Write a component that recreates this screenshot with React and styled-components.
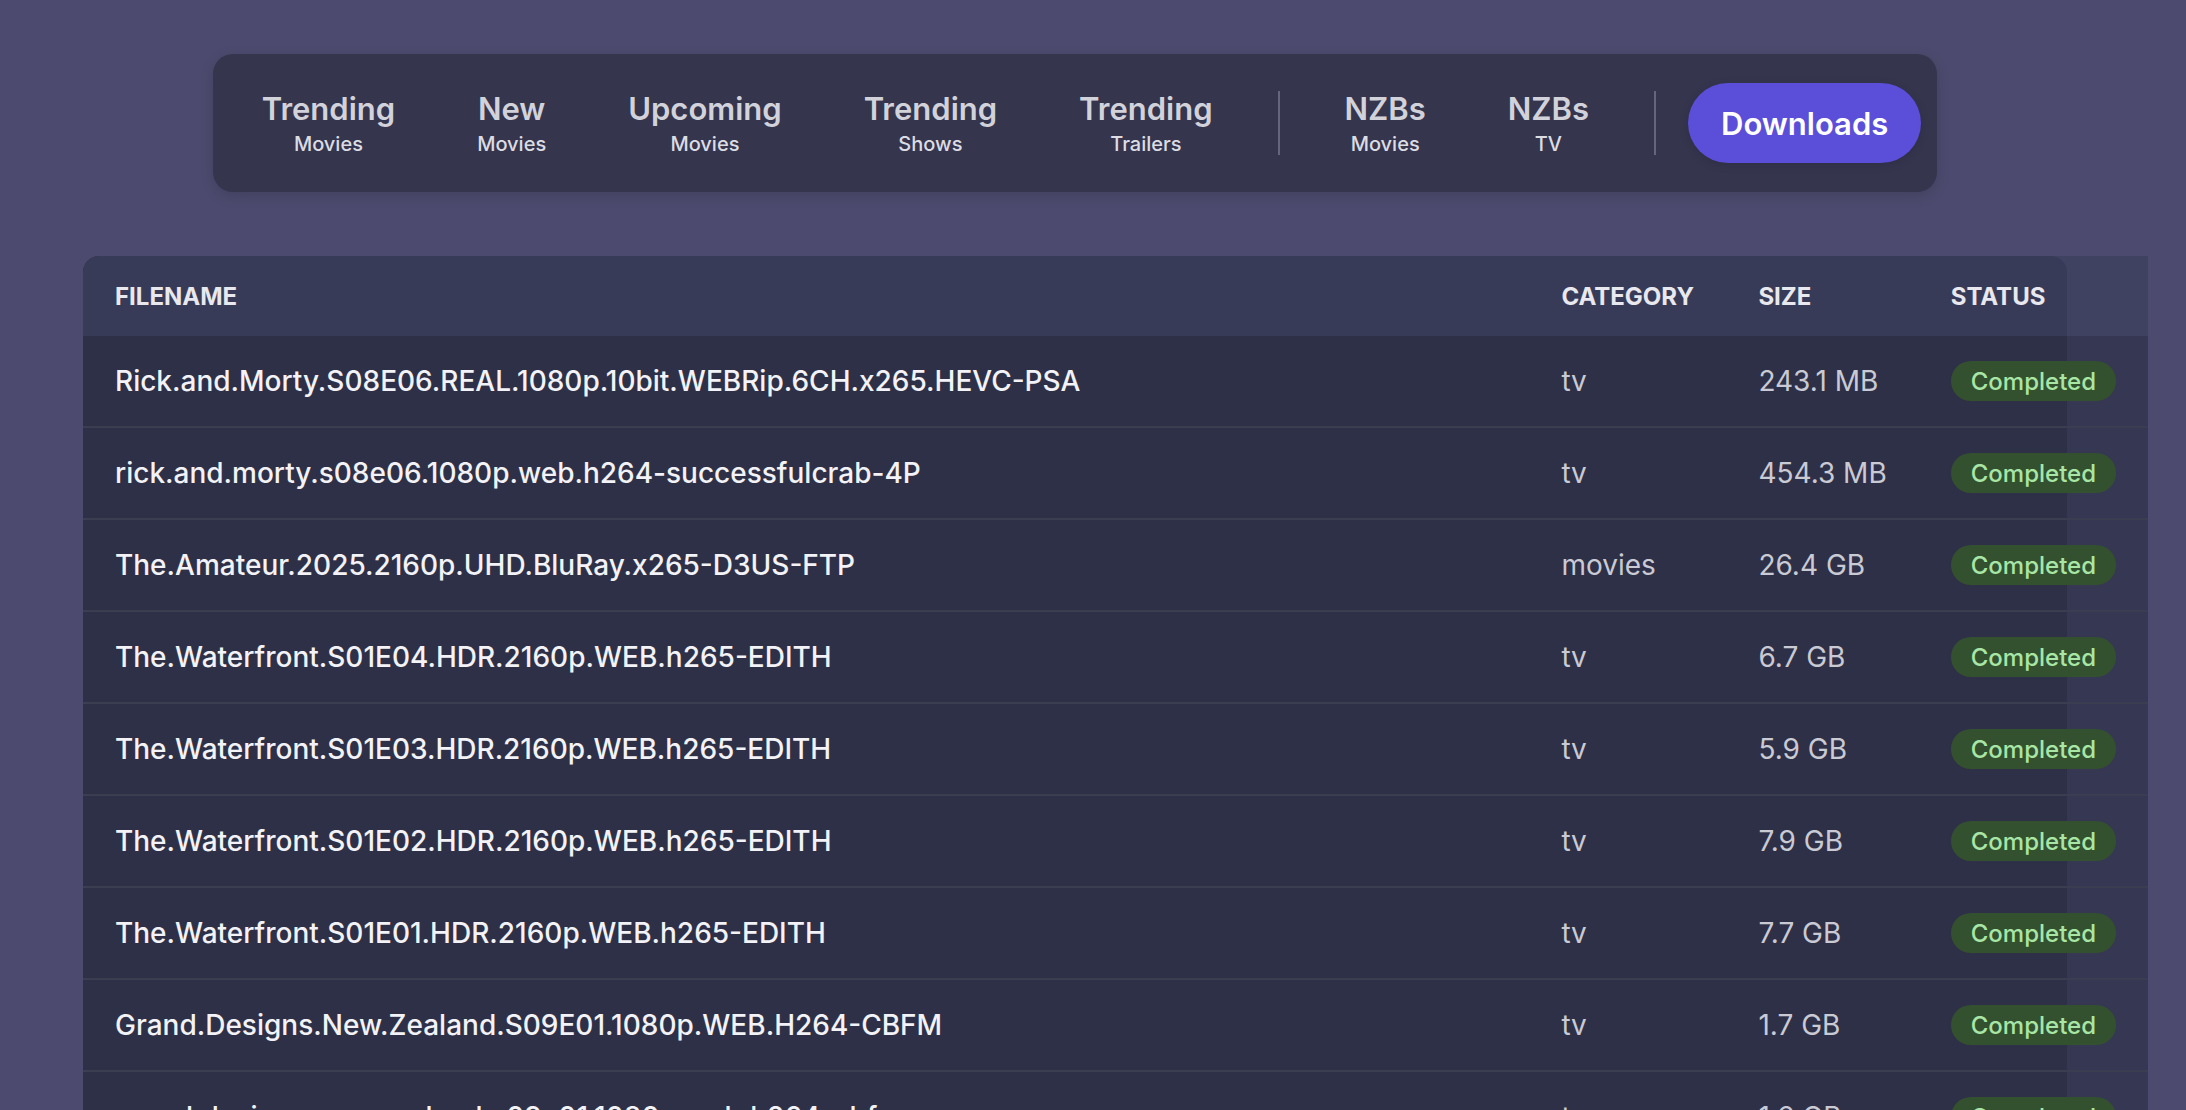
import React from "react";
import styled, { createGlobalStyle } from "styled-components";

const Global = createGlobalStyle`
  html, body { margin: 0; padding: 0; background: #4c4b6f; }
  body { font-family: Inter, "Noto Sans", "Liberation Sans", sans-serif; }
  * { box-sizing: border-box; }
`;

const Page = styled.div`
  width: 2150px;
  padding-top: 54px;
  padding-bottom: 64px;
`;

const Nav = styled.nav`
  width: fit-content;
  margin: 0 auto;
  display: flex;
  align-items: center;
  gap: 16px;
  padding: 29px 16px;
  background: #35354e;
  border-radius: 20px;
  box-shadow: 0 4px 14px rgba(0, 0, 0, 0.14);
`;

const NavItem = styled.button`
  display: flex;
  flex-direction: column;
  align-items: center;
  padding: 0 33px;
  border: 0;
  background: transparent;
  font-family: inherit;
  cursor: pointer;
`;

const NavTitle = styled.span`
  font-size: 31px;
  line-height: 40px;
  font-weight: 600;
  color: #d2d2da;
  white-space: nowrap;
`;

const NavSub = styled.span`
  margin-top: 1px;
  font-size: 20px;
  line-height: 28px;
  font-weight: 500;
  color: #dcdce3;
  white-space: nowrap;
`;

const Divider = styled.div`
  width: 2px;
  height: 64px;
  margin: 0 16px;
  background: #65657c;
`;

const PrimaryButton = styled.button`
  height: 80px;
  padding: 0 33px;
  border: 0;
  border-radius: 40px;
  background: #5b4ed9;
  color: #ffffff;
  font-family: inherit;
  font-size: 31px;
  font-weight: 600;
  white-space: nowrap;
  box-shadow: 0 2px 10px rgba(0, 0, 0, 0.14);
  cursor: pointer;
`;

const Card = styled.section`
  max-width: 1984px;
  margin: 64px auto 0;
  background: #24283a;
  border-radius: 16px;
`;

const Table = styled.table`
  width: 2065px;
  border-collapse: separate;
  border-spacing: 0;
`;

const HeadCell = styled.th`
  height: 80px;
  padding: 0 32px;
  text-align: left;
  background: rgba(61, 64, 95, 0.8);
  color: #e8e8ee;
  font-size: 24px;
  font-weight: 700;
  text-transform: uppercase;
  white-space: nowrap;
  &:first-child { border-top-left-radius: 16px; }
`;

const Row = styled.tr`
  background: rgba(49, 51, 75, 0.78);
`;

const Cell = styled.td`
  height: 92px;
  padding: 0 32px;
  border-bottom: 2px solid #3b3e51;
  font-size: 28px;
  white-space: nowrap;
  color: ${(p) => (p.$primary ? "#f2f2f7" : "#c9cad3")};
  font-weight: ${(p) => (p.$primary ? 500 : 400)};
`;

const Badge = styled.span`
  display: inline-flex;
  align-items: center;
  height: 40px;
  padding: 0 20px;
  border-radius: 20px;
  background: #33512f;
  color: #a8e6a6;
  font-size: 24px;
  font-weight: 500;
`;

const navItems = [
  ["Trending", "Movies"],
  ["New", "Movies"],
  ["Upcoming", "Movies"],
  ["Trending", "Shows"],
  ["Trending", "Trailers"],
];
const nzbItems = [
  ["NZBs", "Movies"],
  ["NZBs", "TV"],
];

const rows = [
  ["Rick.and.Morty.S08E06.REAL.1080p.10bit.WEBRip.6CH.x265.HEVC-PSA", "tv", "243.1 MB"],
  ["rick.and.morty.s08e06.1080p.web.h264-successfulcrab-4P", "tv", "454.3 MB"],
  ["The.Amateur.2025.2160p.UHD.BluRay.x265-D3US-FTP", "movies", "26.4 GB"],
  ["The.Waterfront.S01E04.HDR.2160p.WEB.h265-EDITH", "tv", "6.7 GB"],
  ["The.Waterfront.S01E03.HDR.2160p.WEB.h265-EDITH", "tv", "5.9 GB"],
  ["The.Waterfront.S01E02.HDR.2160p.WEB.h265-EDITH", "tv", "7.9 GB"],
  ["The.Waterfront.S01E01.HDR.2160p.WEB.h265-EDITH", "tv", "7.7 GB"],
  ["Grand.Designs.New.Zealand.S09E01.1080p.WEB.H264-CBFM", "tv", "1.7 GB"],
  ["grand.designs.new.zealand.s09e01.1080p.web.h264-cbfm", "tv", "1.6 GB"],
  ["The.Studio.2025.S01E10.1080p.WEB.h264-ETHEL", "tv", "2.1 GB"],
];

export default function App() {
  return (
    <>
      <Global />
      <Page>
        <Nav>
          {navItems.map(([t, s], i) => (
            <NavItem key={i}>
              <NavTitle>{t}</NavTitle>
              <NavSub>{s}</NavSub>
            </NavItem>
          ))}
          <Divider />
          {nzbItems.map(([t, s], i) => (
            <NavItem key={i}>
              <NavTitle>{t}</NavTitle>
              <NavSub>{s}</NavSub>
            </NavItem>
          ))}
          <Divider />
          <PrimaryButton>Downloads</PrimaryButton>
        </Nav>
        <Card>
          <Table>
            <colgroup>
              <col />
              <col style={{ width: 197 }} />
              <col style={{ width: 192 }} />
              <col style={{ width: 229 }} />
            </colgroup>
            <thead>
              <tr>
                <HeadCell>Filename</HeadCell>
                <HeadCell>Category</HeadCell>
                <HeadCell>Size</HeadCell>
                <HeadCell>Status</HeadCell>
              </tr>
            </thead>
            <tbody>
              {rows.map(([name, cat, size], i) => (
                <Row key={i}>
                  <Cell $primary>{name}</Cell>
                  <Cell>{cat}</Cell>
                  <Cell>{size}</Cell>
                  <Cell>
                    <Badge>Completed</Badge>
                  </Cell>
                </Row>
              ))}
            </tbody>
          </Table>
        </Card>
      </Page>
    </>
  );
}
